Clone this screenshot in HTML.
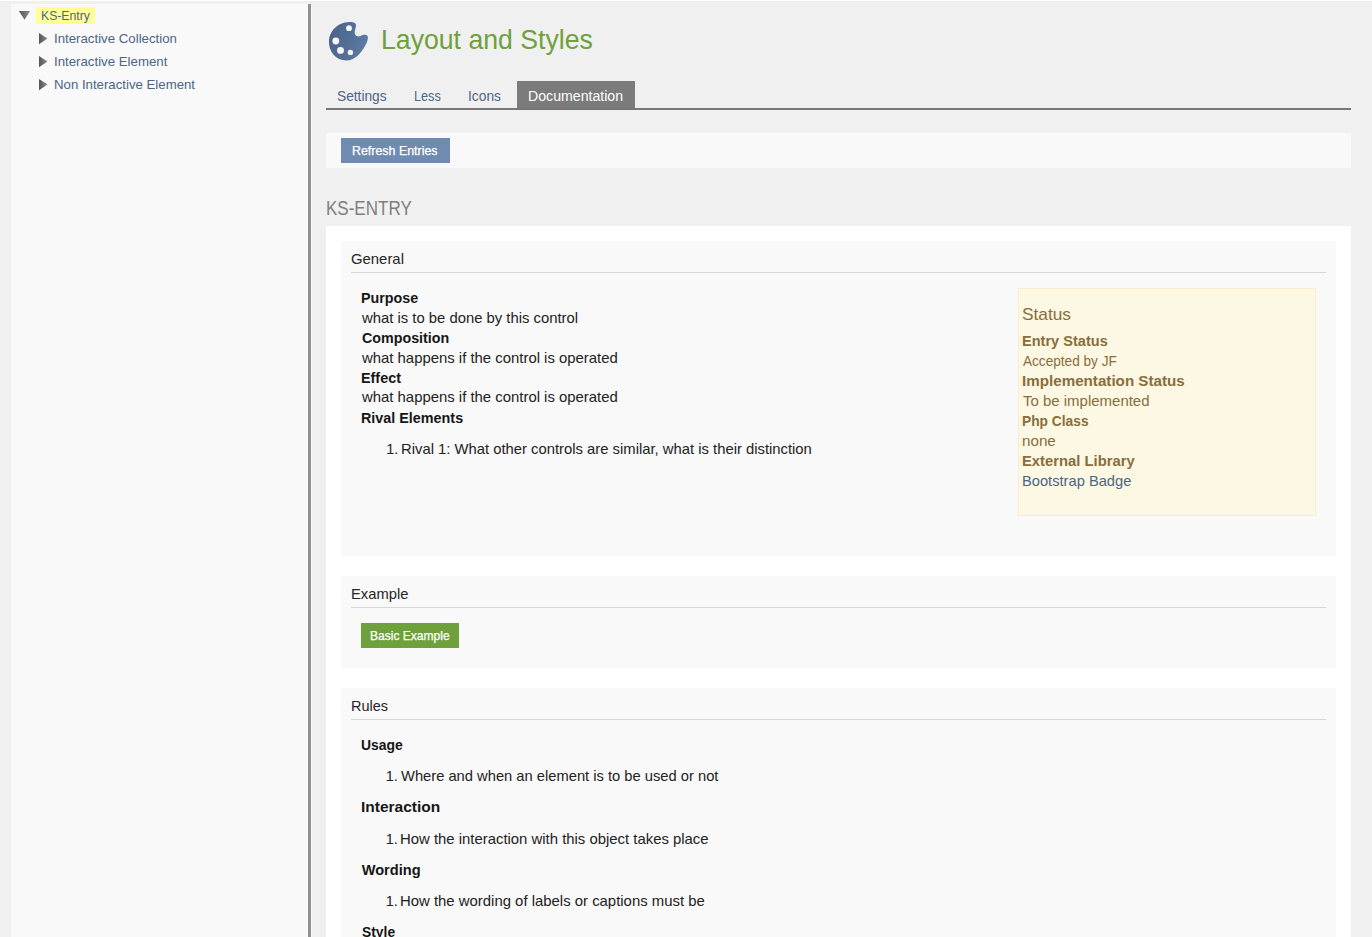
<!DOCTYPE html>
<html><head><meta charset="utf-8">
<style>
*{box-sizing:border-box;margin:0;padding:0}
html,body{width:1372px;height:937px;overflow:hidden}
body{background:#f0f0f0;font-family:"Liberation Sans",sans-serif;color:#161616;position:relative}
.abs{position:absolute}
.tx{position:absolute;white-space:nowrap;line-height:20px;transform-origin:0 0}
#topline{left:0;top:0;width:1372px;height:1px;background:#fff}
#tree{left:11px;top:4px;width:296px;height:940px;background:#f9f9f9}
#bar{left:307px;top:4px;width:5px;height:940px;background:#929292;border-left:1px solid #fafafa;border-right:1px solid #fafafa}
#hl{left:36px;top:7px;width:59px;height:17px;background:#ffff99}
#tabline{left:326px;top:108px;width:1025px;height:2px;background:#777}
#doc{left:517px;top:81px;width:118px;height:27px;background:#7b7b7b}
#toolbar{left:326px;top:133px;width:1025px;height:35px;background:#f9f9f9}
#refresh{left:341px;top:138px;width:109px;height:25px;background:#6f8bb0}
#white{left:326px;top:226px;width:1025px;height:720px;background:#fff}
.panel{position:absolute;left:341px;width:995px;background:#f9f9f9}
.prule{position:absolute;left:10px;width:975px;height:1px;background:#d6d6d6}
#status{left:1018px;top:288px;width:298px;height:228px;background:#fcf8e3;border:1px solid #faebcc}
#bex{left:361px;top:623px;width:98px;height:25px;background:#6ea03c}
</style></head><body>
<div id="topline" class="abs"></div>
<div id="tree" class="abs"></div>
<div id="bar" class="abs"></div>
<div id="hl" class="abs"></div>
<svg class="abs" style="left:18px;top:10px" width="14" height="11" viewBox="0 0 14 11">
<defs><linearGradient id="tg" x1="0" y1="0" x2="1" y2="0"><stop offset="0" stop-color="#555"/><stop offset="1" stop-color="#8c8c8c"/></linearGradient></defs>
<path d="M0.9 1 L12.1 1 L6.5 9.7 Z" fill="url(#tg)"/></svg>
<svg class="abs" style="left:38px;top:32px" width="11" height="14" viewBox="0 0 11 14"><path d="M1 1 L9.5 6.6 L1 12.2 Z" fill="url(#tg)"/></svg>
<svg class="abs" style="left:38px;top:55px" width="11" height="14" viewBox="0 0 11 14"><path d="M1 1 L9.5 6.6 L1 12.2 Z" fill="url(#tg)"/></svg>
<svg class="abs" style="left:38px;top:78px" width="11" height="14" viewBox="0 0 11 14"><path d="M1 1 L9.5 6.6 L1 12.2 Z" fill="url(#tg)"/></svg>

<svg class="abs" style="left:328px;top:21px" width="41" height="41" viewBox="0 0 41 41">
<defs><linearGradient id="pg" x1="0" y1="0" x2="1" y2="0.3"><stop offset="0" stop-color="#4a6186"/><stop offset="1" stop-color="#5b79a2"/></linearGradient></defs>
<path fill="url(#pg)" d="M21 1 C25 0.8 28 1.5 28 4.5 C28 7 26.5 9 26.7 12 C27 15 30 16.2 32.5 15 C35 13.8 38 13 39.6 15 C40.5 17 39.5 21 37 25 C33 32 27 39.5 18.2 39.5 C8 39.5 1 31 1 21 C1 10 10 1.2 21 1 Z"/>
<circle cx="21.0" cy="7.2" r="2.9" fill="#f6f6f6"/>
<circle cx="7.8" cy="20" r="3.45" fill="#f6f6f6"/>
<circle cx="12.5" cy="29.4" r="3.45" fill="#f6f6f6"/>
<circle cx="22.4" cy="31.4" r="2.7" fill="#f6f6f6"/>
</svg>

<div id="tabline" class="abs"></div>
<div id="doc" class="abs"></div>
<div id="toolbar" class="abs"></div>
<div id="refresh" class="abs"></div>
<div id="white" class="abs"></div>

<div class="panel" style="top:241px;height:315px"><div class="prule" style="top:31px"></div></div>
<div id="status" class="abs"></div>
<div class="panel" style="top:576px;height:92px"><div class="prule" style="top:31px"></div></div>
<div id="bex" class="abs"></div>
<div class="panel" style="top:688px;height:260px"><div class="prule" style="top:31px"></div></div>

<span class="tx" style="left:40.73px;top:5.80px;font-size:12.6px;font-weight:400;color:#4c6586;transform:scaleX(0.9700);">KS-Entry</span>
<span class="tx" style="left:53.75px;top:29.00px;font-size:12.6px;font-weight:400;color:#4c6586;transform:scaleX(1.0517);">Interactive Collection</span>
<span class="tx" style="left:53.75px;top:51.90px;font-size:12.6px;font-weight:400;color:#4c6586;transform:scaleX(1.0514);">Interactive Element</span>
<span class="tx" style="left:53.75px;top:74.80px;font-size:12.6px;font-weight:400;color:#4c6586;transform:scaleX(1.0493);">Non Interactive Element</span>
<span class="tx" style="left:381.06px;top:30.00px;font-size:27.5px;font-weight:400;color:#6ea03c;transform:scaleX(0.9690);">Layout and Styles</span>
<span class="tx" style="left:337.02px;top:85.90px;font-size:14.0px;font-weight:400;color:#4c6586;transform:scaleX(0.9796);">Settings</span>
<span class="tx" style="left:413.80px;top:85.90px;font-size:14.0px;font-weight:400;color:#4c6586;transform:scaleX(0.9036);">Less</span>
<span class="tx" style="left:467.72px;top:85.90px;font-size:14.0px;font-weight:400;color:#4c6586;transform:scaleX(0.9844);">Icons</span>
<span class="tx" style="left:527.89px;top:85.70px;font-size:14.0px;font-weight:400;color:#ffffff;transform:scaleX(1.0097);">Documentation</span>
<span class="tx" style="left:352.28px;top:140.60px;font-size:12.2px;font-weight:400;color:#ffffff;transform:scaleX(1.0181);-webkit-text-stroke:0.25px #fff">Refresh Entries</span>
<span class="tx" style="left:326.05px;top:198.00px;font-size:20.0px;font-weight:400;color:#7f7f7f;transform:scaleX(0.8510);">KS-ENTRY</span>
<span class="tx" style="left:351.40px;top:249.00px;font-size:14.6px;font-weight:400;color:#262626;transform:scaleX(1.0196);">General</span>
<span class="tx" style="left:360.52px;top:288.00px;font-size:14.6px;font-weight:700;color:#161616;transform:scaleX(0.9807);">Purpose</span>
<span class="tx" style="left:361.50px;top:307.80px;font-size:14.5px;font-weight:400;color:#222222;transform:scaleX(1.0232);">what is to be done by this control</span>
<span class="tx" style="left:361.50px;top:327.80px;font-size:14.6px;font-weight:700;color:#161616;transform:scaleX(0.9775);">Composition</span>
<span class="tx" style="left:361.50px;top:347.60px;font-size:14.5px;font-weight:400;color:#222222;transform:scaleX(1.0269);">what happens if the control is operated</span>
<span class="tx" style="left:360.51px;top:367.60px;font-size:14.6px;font-weight:700;color:#161616;transform:scaleX(0.9850);">Effect</span>
<span class="tx" style="left:361.50px;top:387.40px;font-size:14.5px;font-weight:400;color:#222222;transform:scaleX(1.0269);">what happens if the control is operated</span>
<span class="tx" style="left:360.52px;top:408.00px;font-size:14.6px;font-weight:700;color:#161616;transform:scaleX(0.9835);">Rival Elements</span>
<span class="tx" style="left:386.20px;top:438.80px;font-size:14.5px;font-weight:400;color:#222222;transform:scaleX(1.0000);">1.</span>
<span class="tx" style="left:400.98px;top:438.80px;font-size:14.5px;font-weight:400;color:#222222;transform:scaleX(1.0217);">Rival 1: What other controls are similar, what is their distinction</span>
<span class="tx" style="left:1022.08px;top:305.00px;font-size:17.0px;font-weight:400;color:#8a6d3b;transform:scaleX(1.0170);">Status</span>
<span class="tx" style="left:1022.10px;top:331.20px;font-size:14.6px;font-weight:700;color:#8a6d3b;transform:scaleX(0.9976);">Entry Status</span>
<span class="tx" style="left:1023.10px;top:351.00px;font-size:14.5px;font-weight:400;color:#8a6d3b;transform:scaleX(0.9380);">Accepted by JF</span>
<span class="tx" style="left:1022.06px;top:371.20px;font-size:14.6px;font-weight:700;color:#8a6d3b;transform:scaleX(1.0400);">Implementation Status</span>
<span class="tx" style="left:1023.10px;top:391.00px;font-size:14.5px;font-weight:400;color:#8a6d3b;transform:scaleX(1.0328);">To be implemented</span>
<span class="tx" style="left:1022.16px;top:410.90px;font-size:14.6px;font-weight:700;color:#8a6d3b;transform:scaleX(0.9435);">Php Class</span>
<span class="tx" style="left:1022.05px;top:430.70px;font-size:14.5px;font-weight:400;color:#8a6d3b;transform:scaleX(1.0484);">none</span>
<span class="tx" style="left:1022.09px;top:450.80px;font-size:14.6px;font-weight:700;color:#8a6d3b;transform:scaleX(1.0136);">External Library</span>
<span class="tx" style="left:1022.09px;top:470.70px;font-size:14.5px;font-weight:400;color:#4c6586;transform:scaleX(1.0121);">Bootstrap Badge</span>
<span class="tx" style="left:350.59px;top:584.00px;font-size:14.6px;font-weight:400;color:#262626;transform:scaleX(1.0107);">Example</span>
<span class="tx" style="left:369.61px;top:625.80px;font-size:12.2px;font-weight:400;color:#ffffff;transform:scaleX(0.9875);-webkit-text-stroke:0.25px #fff">Basic Example</span>
<span class="tx" style="left:350.61px;top:696.00px;font-size:14.6px;font-weight:400;color:#262626;transform:scaleX(0.9917);">Rules</span>
<span class="tx" style="left:360.75px;top:735.10px;font-size:14.6px;font-weight:700;color:#161616;transform:scaleX(0.9535);">Usage</span>
<span class="tx" style="left:385.80px;top:766.00px;font-size:14.5px;font-weight:400;color:#222222;transform:scaleX(1.0000);">1.</span>
<span class="tx" style="left:401.40px;top:766.00px;font-size:14.5px;font-weight:400;color:#222222;transform:scaleX(1.0150);">Where and when an element is to be used or not</span>
<span class="tx" style="left:360.64px;top:797.00px;font-size:14.6px;font-weight:700;color:#161616;transform:scaleX(1.0603);">Interaction</span>
<span class="tx" style="left:385.80px;top:828.90px;font-size:14.5px;font-weight:400;color:#222222;transform:scaleX(1.0000);">1.</span>
<span class="tx" style="left:400.37px;top:828.90px;font-size:14.5px;font-weight:400;color:#222222;transform:scaleX(1.0264);">How the interaction with this object takes place</span>
<span class="tx" style="left:361.70px;top:860.10px;font-size:14.6px;font-weight:700;color:#161616;transform:scaleX(1.0000);">Wording</span>
<span class="tx" style="left:385.80px;top:891.40px;font-size:14.5px;font-weight:400;color:#222222;transform:scaleX(1.0000);">1.</span>
<span class="tx" style="left:400.37px;top:891.40px;font-size:14.5px;font-weight:400;color:#222222;transform:scaleX(1.0275);">How the wording of labels or captions must be</span>
<span class="tx" style="left:361.70px;top:922.30px;font-size:14.6px;font-weight:700;color:#161616;transform:scaleX(0.9486);">Style</span>
</body></html>
